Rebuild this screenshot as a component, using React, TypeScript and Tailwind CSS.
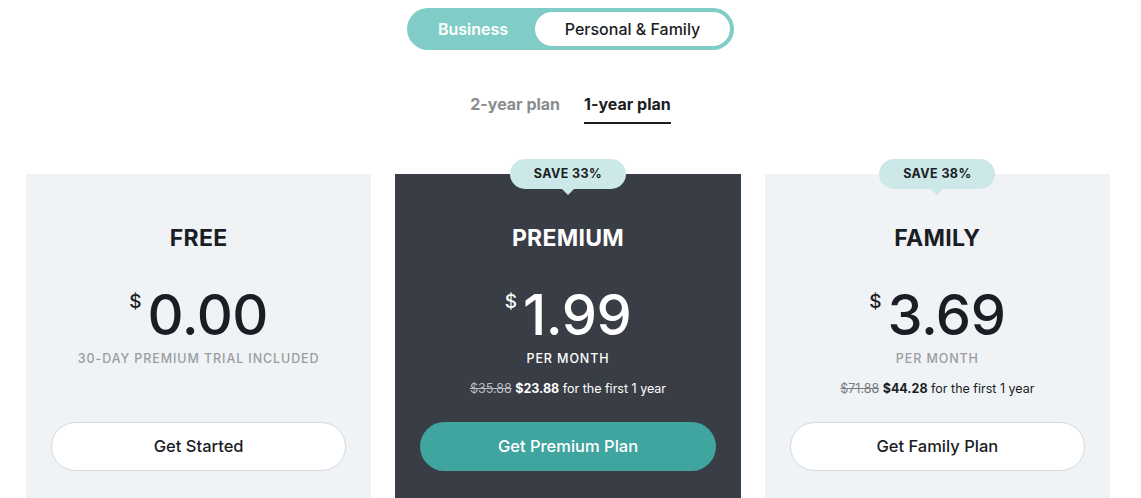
import React from "react";

type Plan = {
  name: string;
  price: string;
  sub: string;
  oldPrice?: string;
  newPrice?: string;
  badge?: string;
  cta: string;
  dark?: boolean;
};

const PLANS: Plan[] = [
  { name: "FREE", price: "0.00", sub: "30-DAY PREMIUM TRIAL INCLUDED", cta: "Get Started" },
  {
    name: "PREMIUM",
    price: "1.99",
    sub: "PER MONTH",
    oldPrice: "$35.88",
    newPrice: "$23.88",
    badge: "SAVE 33%",
    cta: "Get Premium Plan",
    dark: true,
  },
  {
    name: "FAMILY",
    price: "3.69",
    sub: "PER MONTH",
    oldPrice: "$71.88",
    newPrice: "$44.28",
    badge: "SAVE 38%",
    cta: "Get Family Plan",
  },
];

function Badge({ text }: { text: string }) {
  return (
    <div className="absolute -top-[15px] left-1/2 -translate-x-1/2 flex flex-col items-center">
      <div className="h-[30px] w-[116px] rounded-full bg-[#cde8e8] flex items-center justify-center text-[12.5px] font-bold tracking-[0.4px] text-[#1a1d24]">
        {text}
      </div>
      <div className="w-0 h-0 border-l-[6px] border-r-[6px] border-t-[6px] border-l-transparent border-r-transparent border-t-[#cde8e8]" />
    </div>
  );
}

function PlanCard({ p }: { p: Plan }) {
  const dark = !!p.dark;
  return (
    <div className={`relative h-[340px] flex flex-col items-center ${dark ? "bg-[#393d45]" : "bg-[#eff3f6]"}`}>
      {p.badge && <Badge text={p.badge} />}
      <h2 className={`mt-[48px] h-[32px] leading-[32px] text-[23px] font-bold tracking-[0.3px] ${dark ? "text-white" : "text-[#1a1d24]"}`}>
        {p.name}
      </h2>
      <div className={`mt-[33px] h-[56px] flex items-start ${dark ? "text-white" : "text-[#1a1d24]"}`}>
        <span className="text-[19px] leading-none font-medium mt-[5px] mr-[6px]">$</span>
        <span className="text-[56px] leading-[56px] font-medium tracking-[-0.5px]">{p.price}</span>
      </div>
      <div className={`mt-[8px] h-[16px] leading-[16px] text-[12.5px] tracking-[0.9px] font-medium ${dark ? "text-white" : "text-[#9a9c9f]"}`}>
        {p.sub}
      </div>
      <div className={`mt-[12px] h-[20px] leading-[20px] text-[12.5px] ${dark ? "text-white" : "text-[#1a1d24]"}`}>
        {p.oldPrice && (
          <>
            <span className={`line-through ${dark ? "text-[#b8bbc0]" : "text-[#7a7d82]"}`}>{p.oldPrice}</span>{" "}
            <span className="font-bold">{p.newPrice}</span> for the first 1 year
          </>
        )}
      </div>
      <button
        className={`mt-[23px] h-[49px] w-[calc(100%-50px)] rounded-full text-[16.5px] font-medium ${
          dark ? "bg-[#40a49f] text-white" : "bg-white text-[#1a1d24] border border-[#d3d9df]"
        }`}
      >
        {p.cta}
      </button>
    </div>
  );
}

export default function App() {
  return (
    <div className="w-[1141px] h-[498px] overflow-hidden bg-white font-['Inter',sans-serif] flex flex-col items-center">
      <div className="shrink-0 mt-[8px] h-[42px] w-[327px] rounded-full bg-[#7fcdc6] p-[4px] flex">
        <div className="w-[124px] flex items-center justify-center text-[16px] font-semibold text-white">Business</div>
        <div className="flex-1 rounded-full bg-white flex items-center justify-center text-[16px] font-medium text-[#1a1d24]">
          Personal &amp; Family
        </div>
      </div>

      <div className="shrink-0 mt-[42px] flex gap-[24px] text-[16px] font-bold">
        <div className="h-[32px] leading-[24px] text-[#8a8c90]">2-year plan</div>
        <div className="h-[32px] leading-[24px] text-[#1a1d24] border-b-2 border-[#1a1d24]">1-year plan</div>
      </div>

      <div className="shrink-0 mt-[50px] w-full pl-[26px] pr-[31px] grid grid-cols-3 gap-[24px]">
        {PLANS.map((p) => (
          <PlanCard key={p.name} p={p} />
        ))}
      </div>
    </div>
  );
}
